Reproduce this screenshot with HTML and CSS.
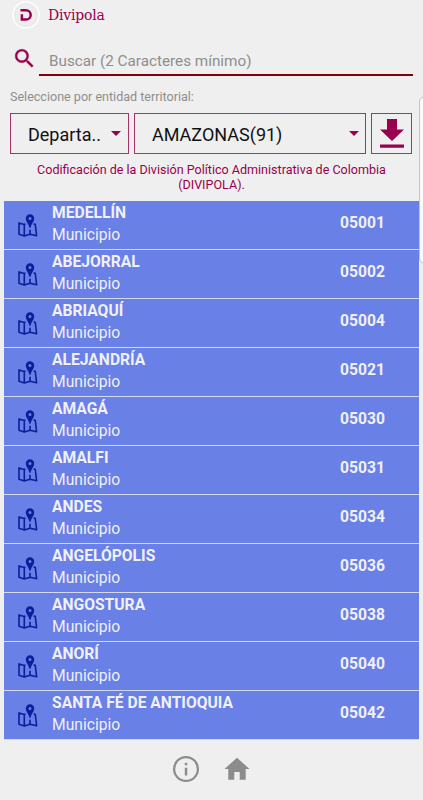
FILE: index.html
```html
<!DOCTYPE html>
<html lang="es">
<head>
    <meta charset="UTF-8">
    <meta name="viewport" content="width=device-width, initial-scale=1.0">
    <title>Divipola</title>
    <link rel="stylesheet" href="styles.css">
</head>
<body>

<!-- Shared icons -->
<svg class="sprite" width="0" height="0">
    <symbol id="map" viewBox="0 0 22 24">
        <path d="M8.500 10.100 L7.300 10.500 L2 8.900 V20.200 L7.300 22 L13 20.200 L19.600 21.800 L18.300 10.500 L16.600 9.800 M7.300 10.500 V22 M13 15.800 V20.200" fill="none" stroke="#0a1f9c" stroke-width="1.600" stroke-linejoin="round"/>
        <path fill="#0a1f9c" fill-rule="evenodd" d="M13 .3 a4.200 4.200 0 0 1 4.200 4.200 C17.200 7.600 14.400 9.500 13.600 13.800 H12.400 C11.600 9.500 8.800 7.600 8.800 4.500 a4.200 4.200 0 0 1 4.200-4.200 Z M13 3.100 a1.500 1.500 0 1 0 0 3 a1.500 1.500 0 1 0 0-3 Z"/>
    </symbol>
</svg>

<header class="header">
    <div class="logo">
        <svg width="14" height="14" viewBox="0 0 14 14">
            <path d="M1.500 2.200 H7 A4.700 4.700 0 0 1 7 11.600 H2.700 M2.900 12.800 V6.200" fill="none" stroke="#99004d" stroke-width="2.500"/>
        </svg>
    </div>
    <h1 class="title">Divipola</h1>
</header>

<main>
    <div class="search">
        <svg class="search-icon" width="25" height="25" viewBox="0 0 24 24">
            <path fill="#99004d" stroke="#99004d" stroke-width=".3" d="M15.500 14h-.79l-.28-.27A6.471 6.471 0 0 0 16 9.500 6.500 6.500 0 1 0 9.500 16c1.610 0 3.090-.59 4.230-1.570l.27.28v.79l5 4.990L20.490 19l-4.990-5zm-6 0C7.010 14 5 11.990 5 9.500S7.010 5 9.500 5 14 7.010 14 9.500 11.990 14 9.500 14z"/>
        </svg>
        <input class="search-input" type="text" placeholder="Buscar (2 Caracteres mínimo)">
    </div>

    <p class="label">Seleccione por entidad territorial:</p>

    <div class="filters">
        <div class="select select-type"><span>Departa..</span><i class="caret"></i></div>
        <div class="select select-name"><span>AMAZONAS(91)</span><i class="caret"></i></div>
        <button class="download" type="button" aria-label="Descargar">
            <svg width="24" height="29" viewBox="0 0 24 29">
                <path fill="#99004d" d="M7 0 H17 V10.500 H24 L12 22 L0 10.500 H7 Z M0 25.500 H24 V28.700 H0 Z"/>
            </svg>
        </button>
    </div>

    <p class="caption">Codificación de la División Político Administrativa de Colombia (DIVIPOLA).</p>

    <ul class="list">
        <li class="row"><svg class="pin"><use href="#map"/></svg><div class="place"><b>MEDELLÍN</b><span>Municipio</span></div><strong class="code">05001</strong></li>
        <li class="row"><svg class="pin"><use href="#map"/></svg><div class="place"><b>ABEJORRAL</b><span>Municipio</span></div><strong class="code">05002</strong></li>
        <li class="row"><svg class="pin"><use href="#map"/></svg><div class="place"><b>ABRIAQUÍ</b><span>Municipio</span></div><strong class="code">05004</strong></li>
        <li class="row"><svg class="pin"><use href="#map"/></svg><div class="place"><b>ALEJANDRÍA</b><span>Municipio</span></div><strong class="code">05021</strong></li>
        <li class="row"><svg class="pin"><use href="#map"/></svg><div class="place"><b>AMAGÁ</b><span>Municipio</span></div><strong class="code">05030</strong></li>
        <li class="row"><svg class="pin"><use href="#map"/></svg><div class="place"><b>AMALFI</b><span>Municipio</span></div><strong class="code">05031</strong></li>
        <li class="row"><svg class="pin"><use href="#map"/></svg><div class="place"><b>ANDES</b><span>Municipio</span></div><strong class="code">05034</strong></li>
        <li class="row"><svg class="pin"><use href="#map"/></svg><div class="place"><b>ANGELÓPOLIS</b><span>Municipio</span></div><strong class="code">05036</strong></li>
        <li class="row"><svg class="pin"><use href="#map"/></svg><div class="place"><b>ANGOSTURA</b><span>Municipio</span></div><strong class="code">05038</strong></li>
        <li class="row"><svg class="pin"><use href="#map"/></svg><div class="place"><b>ANORÍ</b><span>Municipio</span></div><strong class="code">05040</strong></li>
        <li class="row"><svg class="pin"><use href="#map"/></svg><div class="place"><b>SANTA FÉ DE ANTIOQUIA</b><span>Municipio</span></div><strong class="code">05042</strong></li>
    </ul>
</main>

<footer class="footer">
    <svg width="26" height="26" viewBox="0 0 26 26">
        <circle cx="13" cy="13" r="11.900" fill="none" stroke="#8c8c8c" stroke-width="2.200"/>
        <path fill="#8c8c8c" d="M11.800 6.800 h2.500 v2.500 h-2.500 Z M11.800 11.700 h2.500 v7.800 h-2.500 Z"/>
    </svg>
    <svg width="26" height="26" viewBox="0 0 26 26">
        <path fill="#8c8c8c" d="M13 1.700 L25.500 13 H21.700 V23.700 H15.700 V16 H10.300 V23.700 H4.300 V13 H.5 Z"/>
    </svg>
</footer>

<!-- Edge panel handle of the phone -->
<div class="edge-handle"></div>

</body>
</html>
```
FILE: styles.css
```css
* {
    margin: 0;
    padding: 0;
    box-sizing: border-box;
}

body {
    position: relative;
    width: 423px;
    height: 800px;
    overflow: hidden;
    background-color: #efefef;
    font-family: Roboto, "Liberation Sans", sans-serif;
}

.sprite {
    display: block;
}

/* Header */
.header {
    display: flex;
    align-items: center;
    height: 30px;
    padding-left: 12px;
}

.logo {
    display: flex;
    align-items: center;
    justify-content: center;
    width: 28px;
    height: 28px;
    border: 2px solid #fafafa;
    border-radius: 50%;
    background-color: #eeeeee;
    box-shadow: inset 0 0 3px #dddddd;
}

.title {
    margin-left: 8px;
    font-family: "DejaVu Serif", serif;
    font-size: 14px;
    font-weight: normal;
    letter-spacing: -0.2px;
    color: #99004d;
}

/* Search */
.search {
    display: flex;
    height: 46px;
    padding: 16px 10px 0 12px;
}

.search-icon {
    margin-right: 2px;
}

.search-input {
    flex: 1;
    height: 30px;
    padding: 1px 10px 0;
    border: none;
    border-bottom: 2px solid #80000c;
    background: none;
    font-family: inherit;
    font-size: 15.25px;
    outline: none;
}

.search-input::placeholder {
    color: #8e8e8e;
}

.label {
    height: 37px;
    padding: 13px 10px 0;
    font-size: 12.55px;
    line-height: 16px;
    color: #8e8e8e;
}

/* Filters */
.filters {
    display: flex;
    gap: 5px;
    height: 41px;
    padding-left: 10px;
}

.select {
    display: flex;
    align-items: center;
    justify-content: space-between;
    border: 1px solid #a8326a;
    font-size: 18px;
    color: #111111;
}

.select span {
    padding-top: 2px;
}

.select-type {
    width: 119px;
    padding: 0 7px 0 17px;
}

.select-name {
    width: 232px;
    padding: 0 6px 0 17px;
}

.caret {
    border-top: 5px solid #99004d;
    border-left: 5px solid transparent;
    border-right: 5px solid transparent;
}

.download {
    display: flex;
    justify-content: center;
    width: 41px;
    padding-top: 5px;
    border: 1px solid #a8326a;
    background: none;
}

.caption {
    height: 47px;
    padding: 8px 30px 0;
    font-size: 12.55px;
    line-height: 15px;
    text-align: center;
    color: #99004d;
}

/* List */
.list {
    width: 415px;
    margin-left: 4px;
    list-style: none;
}

.row {
    display: flex;
    height: 49px;
    padding-left: 13px;
    border-bottom: 1px solid #d5d9ec;
    background-color: #6980e6;
    color: #f0f0f5;
}

.pin {
    width: 22px;
    height: 24px;
    margin-top: 13px;
}

.place {
    display: flex;
    flex-direction: column;
    width: 301px;
    padding: 1px 0 0 13px;
    font-size: 15.65px;
    line-height: 22px;
}

.code {
    font-size: 15.65px;
    line-height: 44px;
}

/* Footer */
.footer {
    display: flex;
    gap: 25px;
    padding: 16px 0 0 173px;
}

.edge-handle {
    position: absolute;
    top: 96px;
    left: 419px;
    width: 12px;
    height: 168px;
    border: 1px solid #c4c4c4;
    border-radius: 6px;
    background-color: #fafafa;
}
```
